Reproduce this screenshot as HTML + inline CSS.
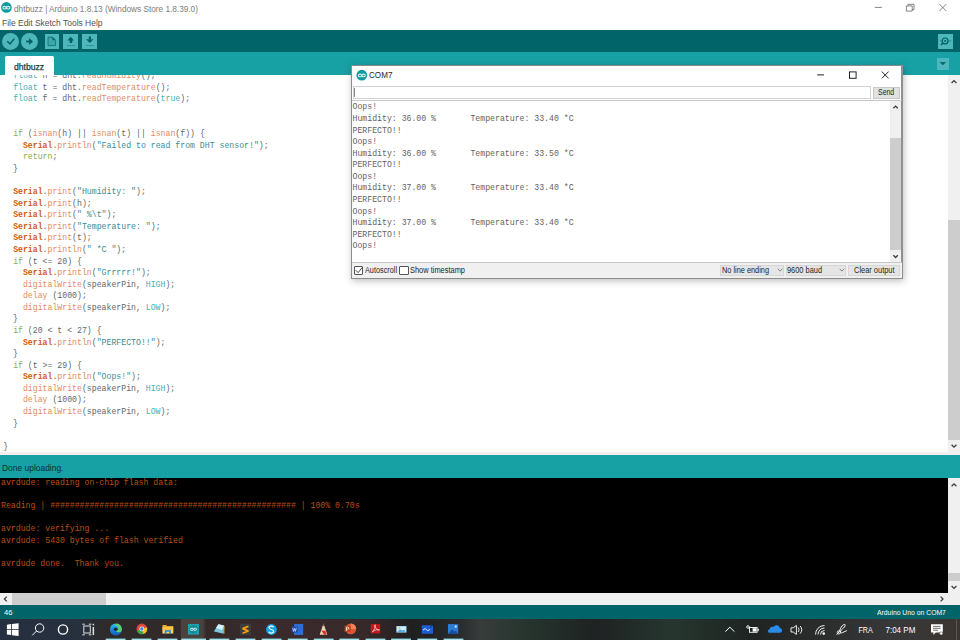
<!DOCTYPE html>
<html><head><meta charset="utf-8">
<style>
*{margin:0;padding:0;box-sizing:border-box}
html,body{width:960px;height:640px;overflow:hidden;background:#fff}
body{position:relative;font-family:"Liberation Sans",sans-serif}
.a{position:absolute}
.t{position:absolute;white-space:pre;line-height:1}
.m{font-family:"Liberation Mono",monospace;white-space:pre}
/* syntax */
.kw{color:#95A750}.ty{color:#45AFB3}.fn{color:#E28D60}.se{color:#D35A10;font-weight:bold}.st{color:#3E8C8E}
.code{position:absolute;left:3.3px;top:70.26px;font-size:8.2px;line-height:11.58px;color:#60686C}
</style></head><body>

<!-- title bar -->
<div class="a" style="left:0;top:0;width:960px;height:30px;background:#fff"></div>
<svg class="a" style="left:0;top:0" width="14" height="14" viewBox="0 0 14 14"><circle cx="6.4" cy="7.4" r="5.3" fill="#0E9A9E"/><g fill="none" stroke="#d8f0f0" stroke-width="1.1"><ellipse cx="4.6" cy="7.7" rx="1.7" ry="1.3"/><ellipse cx="8.2" cy="7.7" rx="1.7" ry="1.3"/></g></svg>

<svg class="a" style="left:860px;top:0" width="100" height="16" viewBox="0 0 100 16"><g fill="none" stroke="#666" stroke-width="0.8"><path d="M14.8 7.4H21.9"/><path d="M46.4 5.9h5.8v5.2h-5.8z M48 5.9V4.3h6v5.4h-1.8"/><path d="M79.4 4.1l6.9 6.9M86.3 4.1l-6.9 6.9"/></g></svg>
<!-- toolbar -->
<div class="a" style="left:0;top:30px;width:960px;height:21.5px;background:#006468"></div>
<div class="a" style="left:2px;top:33px;width:17px;height:17px;border-radius:50%;background:#4DB7BB"></div>
<div class="a" style="left:21px;top:33px;width:17px;height:17px;border-radius:50%;background:#4DB7BB"></div>
<div class="a" style="left:44.6px;top:34px;width:14.6px;height:14.8px;background:#4DB7BB"></div>
<div class="a" style="left:63.3px;top:34px;width:14.8px;height:14.8px;background:#4DB7BB"></div>
<div class="a" style="left:82.3px;top:34px;width:14.8px;height:14.8px;background:#4DB7BB"></div>
<div class="a" style="left:938px;top:34px;width:15px;height:14.8px;background:#4DB7BB"></div>
<svg class="a" style="left:0;top:30px" width="100" height="22" viewBox="0 30 100 22"><g fill="none" stroke="#005F63" stroke-width="1.5" stroke-linecap="square"><path d="M7.8 41.8L10 44L13.9 39.2"/><path d="M27.1 41.5H30.5" stroke-width="1.9"/></g>
<path d="M29.1 38.1L33 41.5L29.1 44.9Z" fill="#005F63"/>
<path d="M48 37.1h4.6l3 3v5.5h-7.6z" fill="#3FA7AA" stroke="#0B6A6D" stroke-width="0.8"/><path d="M52.4 37.1l3.2 3.2h-3.2z" fill="#0B6A6D"/>
<path d="M67.4 40.5L70.7 36.8L74 40.5Z M69.8 40.3h2.4v2.6h-2.4z" fill="#005F63"/><path d="M67 45.6h8" stroke="#1F8A8D" stroke-width="0.8"/>
<path d="M86.1 39.25L89.9 42.9L93.4 39.25Z M88.8 36.5h2.2v2.9h-2.2z" fill="#005F63"/><path d="M86 45.6h8" stroke="#1F8A8D" stroke-width="0.8"/>
</svg>


<!-- tab bar -->
<div class="a" style="left:0;top:51.5px;width:960px;height:23.5px;background:#17A1A5"></div>
<div class="a" style="left:5px;top:56.2px;width:49px;height:19px;background:#fff;border-radius:1.5px 1.5px 0 0"></div>
<div class="a" style="left:937px;top:58px;width:12px;height:11.7px;background:#4DB7BB"></div>

<svg class="a" style="left:930px;top:30px" width="30" height="45" viewBox="930 30 30 45"><g fill="none" stroke="#005F63"><circle cx="945.1" cy="40.9" r="2.9" stroke-width="1.2"/><path d="M943 43L940.9 45.1" stroke-width="1.4"/><path d="M940.2 40.9h1.6M948.3 40.9h2.8" stroke-width="0.5"/></g><circle cx="945.1" cy="40.9" r="1" fill="#005F63"/>
<path d="M939.5 62L946.2 62L942.85 65.3Z" fill="#0A6A6D"/></svg>
<!-- editor -->
<div class="a" style="left:0;top:75px;width:948px;height:377px;background:#fff;overflow:hidden">
<div class="m code" style="top:-4.74px">  <span class="ty">float</span> h = dht.<span class="fn">readHumidity</span>();
  <span class="ty">float</span> t = dht.<span class="fn">readTemperature</span>();
  <span class="ty">float</span> f = dht.<span class="fn">readTemperature</span>(<span class="ty">true</span>);


  <span class="kw">if</span> (<span class="fn">isnan</span>(h) || <span class="fn">isnan</span>(t) || <span class="fn">isnan</span>(f)) {
    <span class="se">Serial</span>.<span class="fn">println</span>(<span class="st">"Failed to read from DHT sensor!"</span>);
    <span class="kw">return</span>;
  }

  <span class="se">Serial</span>.<span class="fn">print</span>(<span class="st">"Humidity: "</span>);
  <span class="se">Serial</span>.<span class="fn">print</span>(h);
  <span class="se">Serial</span>.<span class="fn">print</span>(<span class="st">" %\t"</span>);
  <span class="se">Serial</span>.<span class="fn">print</span>(<span class="st">"Temperature: "</span>);
  <span class="se">Serial</span>.<span class="fn">print</span>(t);
  <span class="se">Serial</span>.<span class="fn">println</span>(<span class="st">" *C "</span>);
  <span class="kw">if</span> (t &lt;= 20) {
    <span class="se">Serial</span>.<span class="fn">println</span>(<span class="st">"Grrrrr!"</span>);
    <span class="fn">digitalWrite</span>(speakerPin, <span class="ty">HIGH</span>);
    <span class="fn">delay</span> (1000);
    <span class="fn">digitalWrite</span>(speakerPin, <span class="ty">LOW</span>);
  }
  <span class="kw">if</span> (20 &lt; t &lt; 27) {
    <span class="se">Serial</span>.<span class="fn">println</span>(<span class="st">"PERFECTO!!"</span>);
  }
  <span class="kw">if</span> (t &gt;= 29) {
    <span class="se">Serial</span>.<span class="fn">println</span>(<span class="st">"Oops!"</span>);
    <span class="fn">digitalWrite</span>(speakerPin, <span class="ty">HIGH</span>);
    <span class="fn">delay</span> (1000);
    <span class="fn">digitalWrite</span>(speakerPin, <span class="ty">LOW</span>);
  }

}</div>
</div>
<!-- editor scrollbar -->
<div class="a" style="left:948px;top:75px;width:12px;height:377px;background:#F0F0F0"></div>
<div class="a" style="left:948px;top:220px;width:12px;height:220px;background:#CDCDCD"></div>
<div class="a" style="left:0;top:452px;width:960px;height:3px;background:#F2EFEF"></div>

<!-- status -->
<div class="a" style="left:0;top:455px;width:960px;height:23px;background:#17A1A5"></div>

<!-- console -->
<div class="a" style="left:0;top:478px;width:948px;height:115px;background:#000;overflow:hidden">
<div class="m" style="position:absolute;left:1px;top:-1.36px;font-size:8.2px;line-height:11.58px;color:#B84E0E">avrdude: reading on-chip flash data:

Reading | ################################################## | 100% 0.70s

avrdude: verifying ...
avrdude: 5430 bytes of flash verified

avrdude done.  Thank you.</div>
</div>
<div class="a" style="left:948px;top:478px;width:12px;height:115px;background:#F0F0F0"></div>
<div class="a" style="left:948px;top:573px;width:12px;height:7.6px;background:#CDCDCD"></div>
<div class="a" style="left:0;top:593px;width:960px;height:12px;background:#F0F0F0"></div>
<div class="a" style="left:12px;top:593px;width:94px;height:12px;background:#CDCDCD"></div>

<svg class="a" style="left:0;top:0" width="960" height="640" viewBox="0 0 960 640"><g fill="none" stroke="#3a3a3a" stroke-width="1.25">
<path d="M951.6 83L954 80.6L956.4 83"/>
<path d="M951.6 444.8L954 447.2L956.4 444.8"/>
<path d="M951.6 486.2L954 483.8L956.4 486.2"/>
<path d="M951.6 586L954 588.4L956.4 586"/>
<path d="M6.8 596.6L4.4 599L6.8 601.4"/>
<path d="M940.6 596.6L943 599L940.6 601.4"/>
</g></svg>
<!-- bottom status -->
<div class="a" style="left:0;top:605px;width:960px;height:14px;background:#006468"></div>

<!-- taskbar -->
<svg class="a" style="left:0;top:619px" width="960" height="21" viewBox="0 619 960 21">
<defs>
<linearGradient id="tbg" x1="0" x2="1" y1="0" y2="0">
<stop offset="0" stop-color="#252f3f"/>
<stop offset="0.085" stop-color="#27303d"/>
<stop offset="0.11" stop-color="#2f2b2a"/>
<stop offset="0.21" stop-color="#34292a"/>
<stop offset="0.30" stop-color="#3b2a2b"/>
<stop offset="0.38" stop-color="#37292a"/>
<stop offset="0.43" stop-color="#201f20"/>
<stop offset="0.48" stop-color="#2a2c2d"/>
<stop offset="0.50" stop-color="#383c3b"/>
<stop offset="0.55" stop-color="#26342e"/>
<stop offset="0.62" stop-color="#1f2222"/>
<stop offset="0.70" stop-color="#26362f"/>
<stop offset="0.78" stop-color="#1f2422"/>
<stop offset="0.85" stop-color="#2a2c2b"/>
<stop offset="0.93" stop-color="#38383a"/>
<stop offset="1" stop-color="#3a3530"/>
</linearGradient>
</defs>
<rect x="0" y="619" width="960" height="21" fill="url(#tbg)"/>
<!-- windows logo -->
<g fill="#fff"><path d="M6.9 624.8L11.2 624.1V629.2H6.9z"/><path d="M12 624L18.6 623.2V629.2H12z"/><path d="M6.9 630H11.2V635.1L6.9 634.4z"/><path d="M12 630H18.6V635.9L12 635.2z"/></g>
<!-- search -->
<g fill="none" stroke="#fff" stroke-width="1"><circle cx="39.6" cy="628" r="4.2"/><path d="M36.6 631L32.3 635.3"/></g>
<!-- cortana -->
<circle cx="63" cy="629.5" r="4.6" fill="none" stroke="#fff" stroke-width="1.4"/>
<!-- task view -->
<g fill="none" stroke="#e0e0e0" stroke-width="1"><rect x="83.8" y="626" width="6.5" height="7"/><path d="M82.3 624.2h2.5M88.8 624.2h2.5M82.3 634.8h2.5M88.8 634.8h2.5"/></g>
<g fill="#e0e0e0"><rect x="92.6" y="623.8" width="1.5" height="1.5"/><rect x="92.6" y="627" width="1.5" height="8"/></g>
<!-- active highlight -->
<rect x="180.8" y="619" width="23" height="21" fill="#4d4540" opacity="0.9"/>
<rect x="204" y="619" width="1.5" height="21" fill="#3c3632"/>
<!-- underlines -->
<g fill="#9fe3ec">
<rect x="105.7" y="638.6" width="19.8" height="1.4"/>
<rect x="131.6" y="638.6" width="19.8" height="1.4"/>
<rect x="157.6" y="638.6" width="19.8" height="1.4"/>
<rect x="181.3" y="638.6" width="24.7" height="1.4"/>
<rect x="209.5" y="638.6" width="19.8" height="1.4"/>
<rect x="235.6" y="638.6" width="19.8" height="1.4"/>
<rect x="261.7" y="638.6" width="19.8" height="1.4"/>
<rect x="287.8" y="638.6" width="19.8" height="1.4"/>
<rect x="313.8" y="638.6" width="19.8" height="1.4"/>
<rect x="339.4" y="638.6" width="19.8" height="1.4"/>
<rect x="365.6" y="638.6" width="19.8" height="1.4"/>
<rect x="391.1" y="638.6" width="19.8" height="1.4"/>
<rect x="417.4" y="638.6" width="19.8" height="1.4"/>
<rect x="443.6" y="638.6" width="19.8" height="1.4"/>
</g>
<!-- edge -->
<defs><linearGradient id="edg" x1="0" y1="0" x2="0.3" y2="1"><stop offset="0" stop-color="#3bd0ef"/><stop offset="0.5" stop-color="#1a8ae0"/><stop offset="1" stop-color="#1560c0"/></linearGradient></defs>
<circle cx="115.9" cy="629.4" r="6" fill="url(#edg)"/>
<path d="M117 623.6a6 6 0 0 1 4.9 6.4c-.3 1.6-1.6 2.4-3.4 2.3c-1.6-.1-2.6-.8-2.8-1.6c1.4 0 2.6-.6 2.6-1.8c0-1.6-1.6-3-3.6-3.2z" fill="#5ccf6e"/>
<ellipse cx="115.6" cy="629.2" rx="1.7" ry="1.5" fill="#241c1c"/>
<!-- chrome -->
<circle cx="141.8" cy="628.9" r="5.3" fill="#e04a3a"/>
<path d="M141.8 628.9L136.8 630.8A5.3 5.3 0 0 0 143.4 634L141.8 628.9z" fill="#2fa650"/>
<path d="M141.8 628.9L143.4 634A5.3 5.3 0 0 0 147 627.2z" fill="#f6c21b"/>
<circle cx="141.8" cy="628.9" r="2.4" fill="#fff"/>
<circle cx="141.8" cy="628.9" r="1.8" fill="#4a8af4"/>
<!-- explorer -->
<path d="M162.4 625.1h3.8l1 1h6.1v1.6h-10.9z" fill="#e8a82a"/>
<rect x="162.4" y="627.2" width="10.9" height="6.3" fill="#ffd65a"/>
<rect x="162.4" y="628.6" width="10.9" height="1.4" fill="#f0b838"/>
<path d="M164.8 630.2h6.1v3.3h-1.6v-1.7h-2.9v1.7h-1.6z" fill="#1f86d8"/>
<!-- arduino -->
<rect x="188" y="624" width="11" height="10.6" fill="#16a5b0"/>
<circle cx="193.5" cy="629.3" r="4.2" fill="#118d96"/>
<g fill="none" stroke="#e8fafa" stroke-width="0.9"><ellipse cx="191.9" cy="629.3" rx="1.5" ry="1.1"/><ellipse cx="195.1" cy="629.3" rx="1.5" ry="1.1"/></g>
<!-- notepad-ish -->
<path d="M218.4 624.2L224 625.4L223.8 633.8L213.9 631.5z" fill="#7cc6e0"/>
<path d="M218.4 624.2L224 625.4L222 630L216 628z" fill="#d8f2fa"/>
<path d="M224 625.4l.6.3l-.2 8.3l-.6-.2z" fill="#d0a030"/>
<!-- sublime -->
<rect x="240" y="623.7" width="11" height="11.3" fill="#3d3d3d"/>
<path d="M248.4 626.4L242.6 628.6L248.4 631L242.6 633.2" fill="none" stroke="#ff9d0a" stroke-width="1.7" stroke-linejoin="bevel"/>
<!-- skype -->
<circle cx="271.4" cy="629.5" r="5.4" fill="#11a3e9"/>
<path d="M273.6 627.3c-.5-.8-1.4-1.2-2.4-1.2c-1.3 0-2.2.7-2.2 1.6c0 2.2 4.6 1.4 4.6 3.6c0 1-1 1.8-2.4 1.8c-1.1 0-2-.5-2.5-1.3" fill="none" stroke="#fff" stroke-width="1.2"/>
<!-- word -->
<rect x="294" y="624" width="9.2" height="11" fill="#2b6fd6"/>
<rect x="291.7" y="626.5" width="6" height="6" fill="#1a4ea8"/>
<path d="M292.7 627.8l.9 3.6l.9-3l.9 3l.9-3.6" fill="none" stroke="#fff" stroke-width="0.6"/>
<!-- pencil -->
<path d="M323.5 623.3l-3.8 11.5h7.6z" fill="#e8d6b0"/>
<path d="M321.3 630.5l2.8 4.3h2.4l-1-4z" fill="#d9312b"/>
<path d="M323.5 623.3l-.8 2.6h1.6z" fill="#6a5040"/>
<!-- powerpoint -->
<circle cx="350.8" cy="628.9" r="5.4" fill="#d85a36"/>
<path d="M350.8 623.5a5.4 5.4 0 0 1 5.4 5.4h-5.4z" fill="#f0845a"/>
<rect x="344.6" y="625.8" width="6" height="6" fill="#c1401f"/>
<path d="M346.4 631v-3.8h1.4a1 1 0 0 1 0 2h-1.4" fill="none" stroke="#fff" stroke-width="0.7"/>
<!-- acrobat -->
<rect x="370.7" y="624.1" width="9.5" height="9.2" fill="#c8161d"/>
<path d="M372.3 632c1.5-1.2 3-4.5 3.2-6.5c.2-1-.8-1-.9 0c-.1 2 2.5 4.6 4.3 4.8c.8 0 .8-.8 0-.8c-2-.1-5 1-6.6 2.5z" fill="none" stroke="#fff" stroke-width="0.6"/>
<!-- photo viewer -->
<rect x="396.3" y="626" width="10.2" height="6.6" fill="#9fd6f4"/>
<rect x="397.2" y="626.9" width="8.4" height="4.8" fill="#cfeefc"/>
<circle cx="399.5" cy="628.3" r="1" fill="#f2b63c"/>
<path d="M397.2 631.7l3-2.3l2 1.4l1.6-1l1.8 1.9z" fill="#3a9bd8"/>
<!-- whiteboard -->
<rect x="421.8" y="625.3" width="11.2" height="8.4" fill="#1c5fd8"/>
<path d="M423 630.2c1.5-1.8 2.5-1.8 3.5-.5c1 1.3 2 1.2 3.5-.5" fill="none" stroke="#fff" stroke-width="0.9"/>
<path d="M430.5 627.5l2.5-3" stroke="#222" stroke-width="1"/>
<!-- photos -->
<rect x="448" y="624.1" width="10.2" height="9.9" fill="#2a7dd6"/>
<path d="M448 634l4-4.8l2.5 2.4l1.3-1l2.4 3.4z" fill="#1a4f9a"/>
<circle cx="455.8" cy="626.6" r="1.1" fill="#e8f4ff"/>
<!-- tray -->
<path d="M725.4 631.6l4.5-4.4l4.5 4.4" fill="none" stroke="#fff" stroke-width="1"/>
<g fill="none" stroke="#fff" stroke-width="0.9"><rect x="749.5" y="627.5" width="7.6" height="4.8"/><path d="M757.6 629h.8v1.8h-.8"/><circle cx="748" cy="627" r="1.3"/></g>
<rect x="752.6" y="628.2" width="3.9" height="3.4" fill="#fff"/>
<path d="M769 632.7h10.6a2.4 2.4 0 0 0 .2-4.8a3.4 3.4 0 0 0-6.3-1a2.6 2.6 0 0 0-3.7 2.4a1.8 1.8 0 0 0-.8 3.4z" fill="#2c8de8"/>
<g fill="none" stroke="#fff" stroke-width="0.9"><path d="M791 627.8h2.2l3.2-2.4v9l-3.2-2.4H791z"/><path d="M798.2 627.5a3.5 3.5 0 0 1 0 4.5M800.2 626a6 6 0 0 1 0 7.6"/></g>
<g fill="none" stroke="#fff" stroke-width="0.9"><path d="M815.5 634.5a9 9 0 0 1 9-9"/><path d="M818 634.5a6.5 6.5 0 0 1 6.5-6.5"/><path d="M820.5 634.5a4 4 0 0 1 4-4"/></g>
<circle cx="823.7" cy="633.6" r="1.3" fill="#fff"/>
<path d="M836.5 634.5c2-1 3-3.5 4-6c.8-2 2.5-4 4-4c1.5 0 .5 2-1 3.5c-1.5 1.4-3.2 2.5-3.2 4.2c0 1 1 1 2 .5c1.5-.8 3-1.6 4.5-2" fill="none" stroke="#fff" stroke-width="1"/>
<circle cx="838.8" cy="632.4" r="1.6" fill="none" stroke="#fff" stroke-width="0.8"/>
<text x="858.4" y="632.9" font-family="Liberation Sans" font-size="8.3" fill="#fff" textLength="14.3" lengthAdjust="spacingAndGlyphs">FRA</text>
<text x="885.5" y="632.9" font-family="Liberation Sans" font-size="8.3" fill="#fff" textLength="29.8" lengthAdjust="spacingAndGlyphs">7:04 PM</text>
<path d="M931 624.2h11.8v8.3h-7l-2.4 2.4v-2.4H931z" fill="#fff"/>
<g stroke="#333" stroke-width="0.7"><path d="M933 626.4h7.6M933 628.3h7.6M933 630.2h5"/></g>
<circle cx="941.2" cy="633.4" r="1.6" fill="#fff" stroke="#333" stroke-width="0.5"/>
<rect x="956" y="619" width="1" height="21" fill="#5a5550"/>
</svg>

<!-- COM7 window -->
<div class="a" style="left:351px;top:65px;width:551.8px;height:214px;background:#fff;border:1px solid #8c8c8c;border-right:2px solid #909090;box-shadow:1px 2px 7px rgba(0,0,0,0.26)"></div>
<svg class="a" style="left:355px;top:69px" width="14" height="14" viewBox="355 69 14 14"><circle cx="361.8" cy="75.2" r="5.4" fill="#0E9A9E"/><g fill="none" stroke="#d8f0f0" stroke-width="1.1"><ellipse cx="360" cy="75.4" rx="1.7" ry="1.3"/><ellipse cx="363.6" cy="75.4" rx="1.7" ry="1.3"/></g></svg>
<svg class="a" style="left:810px;top:66px" width="90" height="20" viewBox="810 66 90 20"><g fill="none" stroke="#222" stroke-width="1"><path d="M817.2 74.9H824"/><rect x="849.5" y="71.9" width="6.6" height="6.4"/><path d="M881.8 71.6L888.6 78.4M888.6 71.6L881.8 78.4"/></g></svg>
<div class="a" style="left:353px;top:86px;width:518px;height:13px;border:1px solid #d2d2d2;background:#fff"></div>
<div class="a" style="left:353.6px;top:88px;width:1.2px;height:8.8px;background:#8a8a8a"></div>
<div class="a" style="left:873.3px;top:87px;width:26.4px;height:11.7px;border:1px solid #c8c8c8;background:#E1E1E1"></div>
<div class="a" style="left:352px;top:100px;width:550px;height:1px;background:#c8c8c8"></div>
<div class="m" style="position:absolute;left:352.5px;top:101.44px;font-size:8.2px;line-height:11.58px;color:#636363">Oops!
Humidity: 36.00 %       Temperature: 33.40 *C
PERFECTO!!
Oops!
Humidity: 36.00 %       Temperature: 33.50 *C
PERFECTO!!
Oops!
Humidity: 37.00 %       Temperature: 33.40 *C
PERFECTO!!
Oops!
Humidity: 37.00 %       Temperature: 33.40 *C
PERFECTO!!
Oops!</div>
<div class="a" style="left:890.3px;top:101px;width:10.5px;height:161px;background:#F0F0F0"></div>
<div class="a" style="left:890.3px;top:138px;width:10.5px;height:112px;background:#CDCDCD"></div>
<div class="a" style="left:352px;top:262px;width:550px;height:16.3px;background:#F0F0F0;border-top:1px solid #c8c8c8"></div>
<div class="a" style="left:354.2px;top:265.7px;width:9.3px;height:9px;border:1px solid #555;border-radius:1px;background:#fff"></div>
<div class="a" style="left:399.4px;top:265.7px;width:9.2px;height:9px;border:1px solid #555;border-radius:1px;background:#fff"></div>
<div class="a" style="left:720px;top:264.5px;width:63.8px;height:11px;border:1px solid #d6d6d6;background:#e5e5e5"></div>
<div class="a" style="left:786px;top:264.5px;width:59.5px;height:11px;border:1px solid #d6d6d6;background:#e5e5e5"></div>
<div class="a" style="left:848.3px;top:264.5px;width:52px;height:11px;border:1px solid #d6d6d6;background:#e5e5e5"></div>

<svg class="a" style="left:0;top:0" width="960" height="640" viewBox="0 0 960 640"><g fill="none" stroke="#3a3a3a" stroke-width="1.25">
<path d="M893.4 108.3L895.6 106.1L897.8 108.3"/>
<path d="M893.4 255.3L895.6 257.5L897.8 255.3"/>
</g><g fill="none" stroke="#666" stroke-width="0.8">
<path d="M777.9 268.8L780.2 271.1L782.5 268.8"/>
<path d="M839.6 268.8L841.9 271.1L844.2 268.8"/>
</g><path d="M355.8 270.2L358.2 272.6L362.2 267.4" fill="none" stroke="#333" stroke-width="0.9"/></svg>
<!-- texts -->
<div class="t" style="left:14.00px;top:4.77px;font-size:8.3px;color:#7c7c7c;transform:scaleX(0.9928);transform-origin:0 0">dhtbuzz | Arduino 1.8.13 (Windows Store 1.8.39.0)</div>
<div class="t" style="left:1.50px;top:19.30px;font-size:8.5px;color:#505050;transform:scaleX(0.9957);transform-origin:0 0">File Edit Sketch Tools Help</div>
<div class="t" style="left:368.60px;top:71.05px;font-size:8.8px;color:#1e1e1e;transform:scaleX(0.9201);transform-origin:0 0">COM7</div>
<div class="t" style="left:878.30px;top:88.30px;font-size:8.5px;color:#1e1e1e;transform:scaleX(0.8162);transform-origin:0 0">Send</div>
<div class="t" style="left:365.00px;top:265.70px;font-size:8.5px;color:#1e1e1e;transform:scaleX(0.8576);transform-origin:0 0">Autoscroll</div>
<div class="t" style="left:410.00px;top:265.70px;font-size:8.5px;color:#1e1e1e;transform:scaleX(0.8756);transform-origin:0 0">Show timestamp</div>
<div class="t" style="left:722.00px;top:265.70px;font-size:8.5px;color:#1e1e1e;transform:scaleX(0.8646);transform-origin:0 0">No line ending</div>
<div class="t" style="left:787.30px;top:265.70px;font-size:8.5px;color:#1e1e1e;transform:scaleX(0.8715);transform-origin:0 0">9600 baud</div>
<div class="t" style="left:854.00px;top:265.70px;font-size:8.5px;color:#1e1e1e;transform:scaleX(0.8764);transform-origin:0 0">Clear output</div>
<div class="t" style="left:13.90px;top:63.47px;font-size:8.3px;color:#0f4446;-webkit-text-stroke:0.25px #0f4446;transform:scaleX(1.0381);transform-origin:0 0">dhtbuzz</div>
<div class="t" style="left:2.30px;top:463.97px;font-size:8.3px;color:#0b2e30;transform:scaleX(1.0171);transform-origin:0 0">Done uploading.</div>
<div class="t" style="left:3.75px;top:609.34px;font-size:7.4px;color:#ffffff;transform:scaleX(1.0226);transform-origin:0 0">46</div>
<div class="t" style="left:876.70px;top:609.66px;font-size:6.9px;color:#ffffff;transform:scaleX(0.9886);transform-origin:0 0">Arduino Uno on COM7</div>
<!-- /texts -->
</body></html>
